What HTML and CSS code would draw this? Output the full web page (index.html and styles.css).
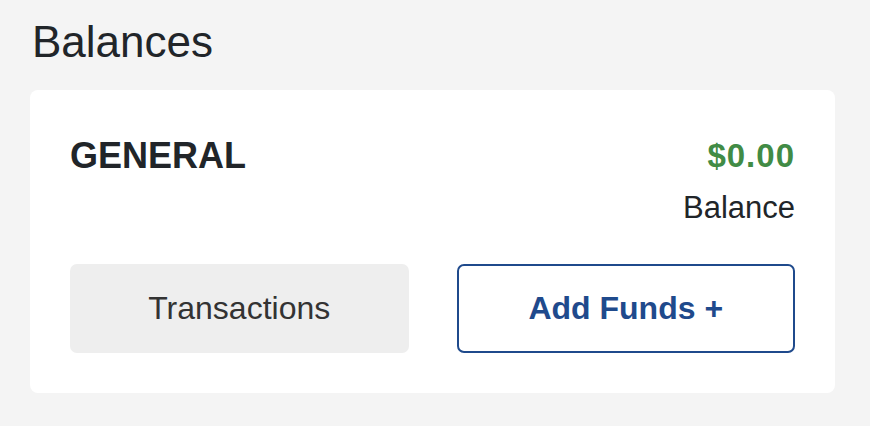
FILE: index.html
```html
<!DOCTYPE html>
<html lang="en">
<head>
    <meta charset="UTF-8">
    <meta name="viewport" content="width=device-width, initial-scale=1.0">
    <title>Balances</title>
    <link rel="stylesheet" href="styles.css">
</head>
<body>
    <div class="page">
        <h1 class="page-title">Balances</h1>

        <div class="balance-card">
            <div class="balance-top">
                <div class="account-name">GENERAL</div>
                <div class="balance-info">
                    <div class="balance-amount">$0.00</div>
                    <div class="balance-label">Balance</div>
                </div>
            </div>

            <div class="balance-actions">
                <button class="btn btn-grey" type="button">Transactions</button>
                <button class="btn btn-outline" type="button">Add Funds +</button>
            </div>
        </div>
    </div>
</body>
</html>
```

FILE: styles.css
```css
body {
    margin: 0;
    padding: 0;
    background: #f4f4f4;
    font-family: "Liberation Sans", Arial, sans-serif;
    color: #212529;
}

.page {
    padding: 16px 35px 0 30px;
}

.page-title {
    margin: 0 0 22px 2px;
    font-size: 44px;
    line-height: 52px;
    font-weight: normal;
}

.balance-card {
    background: #fff;
    border-radius: 8px;
    padding: 44px 40px 40px 40px;
}

.balance-top {
    display: flex;
    justify-content: space-between;
    align-items: flex-start;
}

.account-name {
    font-size: 36px;
    line-height: 44px;
    font-weight: bold;
}

.balance-info {
    text-align: right;
}

.balance-amount {
    font-size: 33px;
    line-height: 44px;
    font-weight: bold;
    color: #418b45;
    letter-spacing: 1px;
}

.balance-label {
    margin-top: 10px;
    font-size: 31px;
    line-height: 40px;
}

.balance-actions {
    display: grid;
    grid-template-columns: 1fr 1fr;
    gap: 48px;
    margin-top: 36px;
}

.btn {
    height: 89px;
    font-family: inherit;
    font-size: 32px;
    border-radius: 7px;
    cursor: pointer;
}

.btn-grey {
    background: #eeeeee;
    border: none;
    color: #333;
}

.btn-outline {
    background: #fff;
    border: 2px solid #1f4a8c;
    color: #1f4a8c;
    font-weight: bold;
}
```
